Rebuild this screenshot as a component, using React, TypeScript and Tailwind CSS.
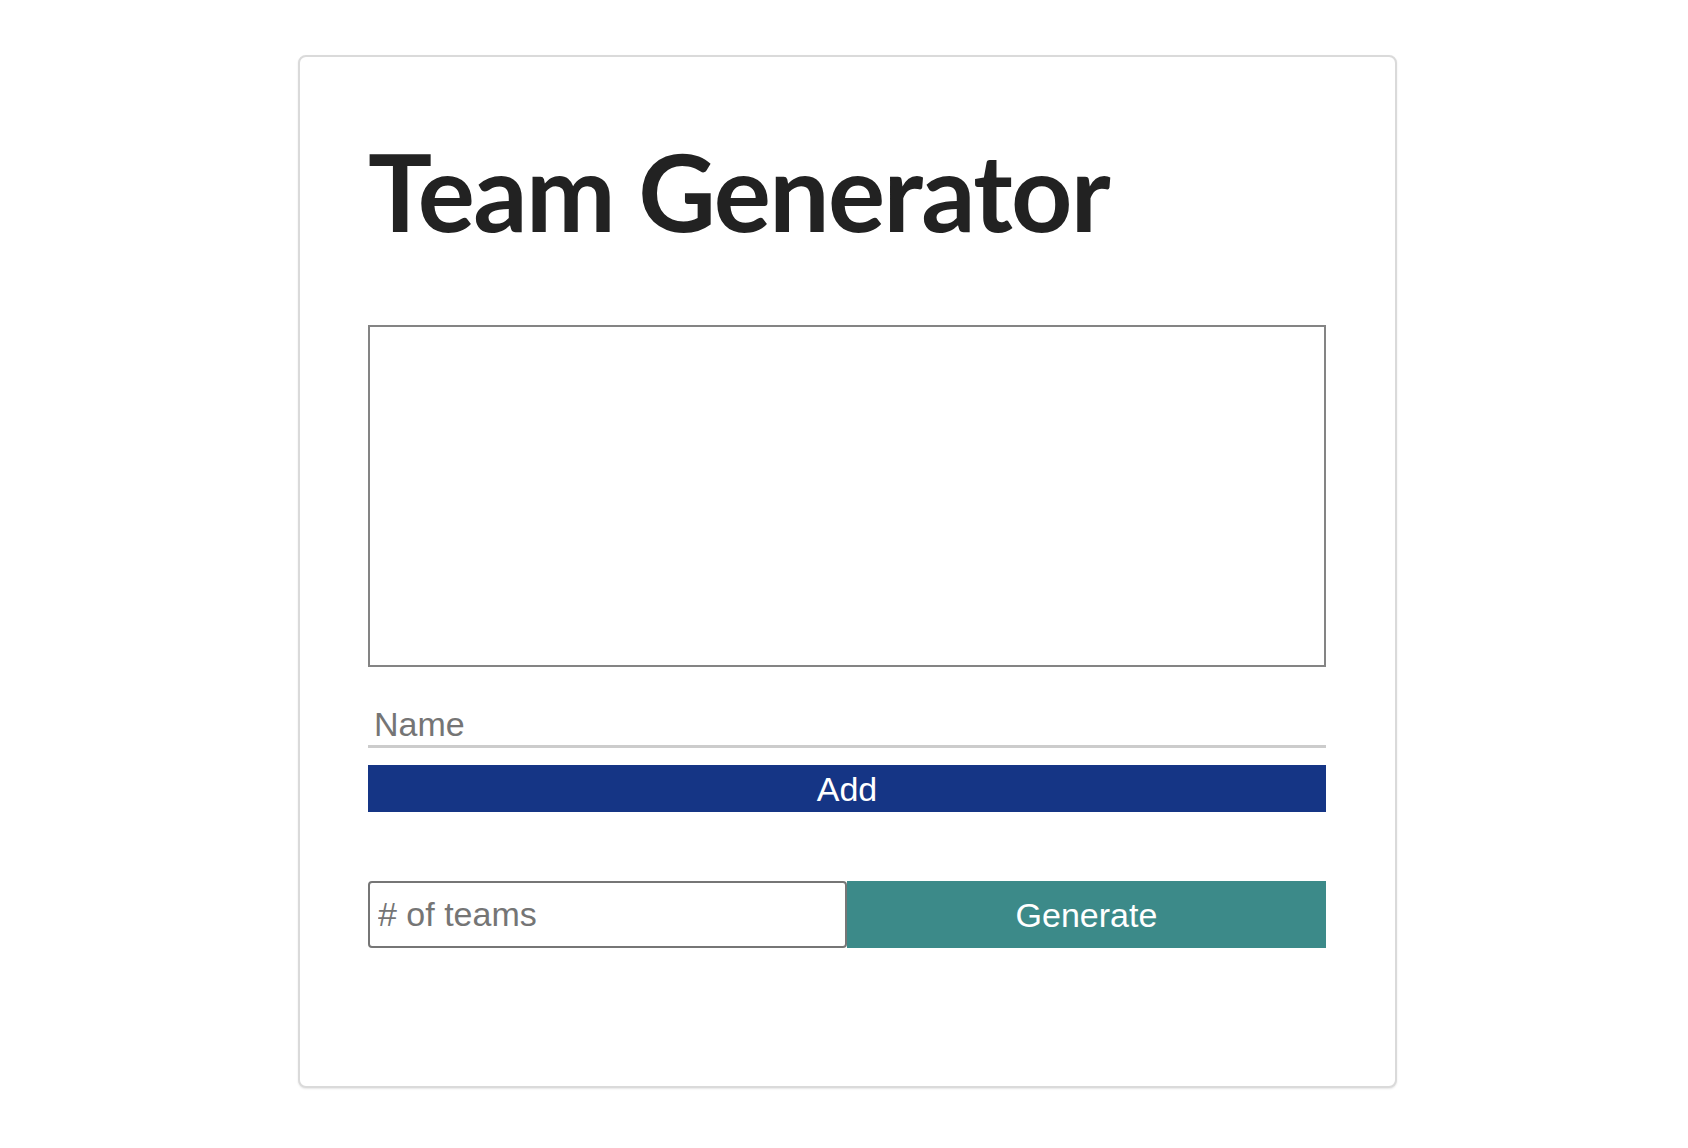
import React, { useState } from 'react'

export default function App(): JSX.Element {
  const [names, setNames] = useState('')
  const [name, setName] = useState('')
  const [teams, setTeams] = useState('')

  const addName = () => {
    if (!name.trim()) return
    setNames((n) => (n ? n + '\n' : '') + name.trim())
    setName('')
  }

  return (
    <div className="min-h-screen bg-white pt-[55px] pb-[40px]" style={{ fontFamily: '"Liberation Sans", Arial, sans-serif' }}>
      <div className="ml-[298px] w-[1099px] rounded-lg border-2 border-[#dadada] bg-white pl-[68px] pr-[69px] pt-[80px] pb-[138px] shadow-[0_1px_2px_rgba(0,0,0,0.1)]">
        <h1
          className="text-[107px] font-bold leading-none tracking-[-1.6px] text-[#222222]"
          style={{ fontFamily: 'Lato, "Noto Sans", sans-serif' }}
        >
          Team Generator
        </h1>

        <textarea
          value={names}
          onChange={(e) => setNames(e.target.value)}
          className="mt-[81px] block h-[342px] w-full resize-none border-2 border-[#848484] bg-white p-2 text-[20px] outline-none"
        />

        <input
          value={name}
          onChange={(e) => setName(e.target.value)}
          placeholder="Name"
          className="mt-[35px] block h-[46px] w-full border-b-[3px] border-[#cccccc] pl-[6px] pt-[2px] text-[34px] text-[#333] outline-none placeholder:text-[#757575]"
        />
        <button
          onClick={addName}
          className="mt-[17px] block h-[47px] w-full bg-[#153585] text-[34px] leading-none text-white"
        >
          Add
        </button>

        <div className="mt-[69px] flex h-[67px]">
          <input
            value={teams}
            onChange={(e) => setTeams(e.target.value)}
            placeholder="# of teams"
            className="h-full w-1/2 rounded-[4px] border-2 border-[#767676] pl-[8px] text-[34px] text-[#333] outline-none placeholder:text-[#757575]"
          />
          <button className="h-full w-1/2 bg-[#3c8a89] text-[34px] leading-none text-white">Generate</button>
        </div>
      </div>
    </div>
  )
}
